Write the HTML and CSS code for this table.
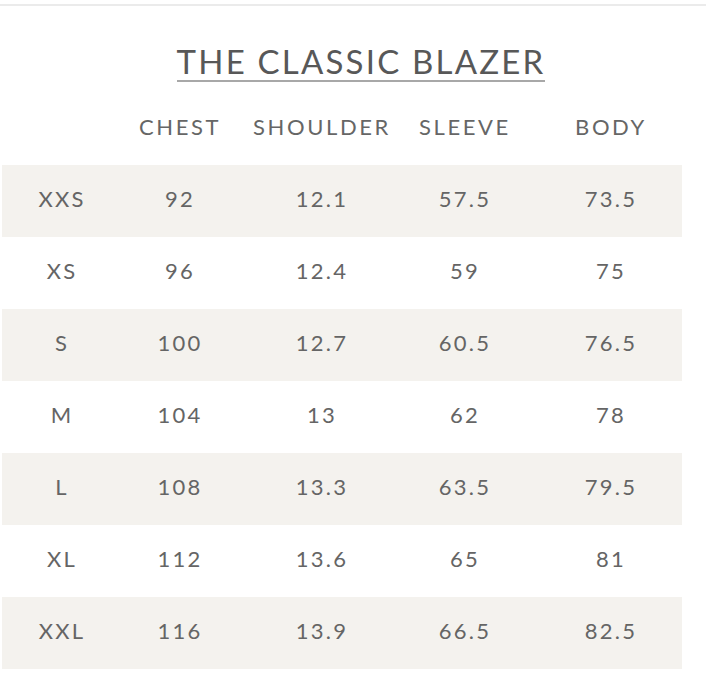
FILE: index.html
```html
<!DOCTYPE html>
<html>
<head>
<meta charset="utf-8">
<link rel="stylesheet" href="styles.css">
</head>
<body>
<div class="topline"></div>
<div class="title-wrap"><h1 class="title">THE CLASSIC BLAZER</h1></div>
<div class="table">
  <div class="row head">
    <div class="c c1"></div><div class="c c2">CHEST</div><div class="c c3">SHOULDER</div><div class="c c4">SLEEVE</div><div class="c c5">BODY</div>
  </div>
  <div class="row shade">
    <div class="c c1">XXS</div><div class="c c2">92</div><div class="c c3">12.1</div><div class="c c4">57.5</div><div class="c c5">73.5</div>
  </div>
  <div class="row">
    <div class="c c1">XS</div><div class="c c2">96</div><div class="c c3">12.4</div><div class="c c4">59</div><div class="c c5">75</div>
  </div>
  <div class="row shade">
    <div class="c c1">S</div><div class="c c2">100</div><div class="c c3">12.7</div><div class="c c4">60.5</div><div class="c c5">76.5</div>
  </div>
  <div class="row">
    <div class="c c1">M</div><div class="c c2">104</div><div class="c c3">13</div><div class="c c4">62</div><div class="c c5">78</div>
  </div>
  <div class="row shade">
    <div class="c c1">L</div><div class="c c2">108</div><div class="c c3">13.3</div><div class="c c4">63.5</div><div class="c c5">79.5</div>
  </div>
  <div class="row">
    <div class="c c1">XL</div><div class="c c2">112</div><div class="c c3">13.6</div><div class="c c4">65</div><div class="c c5">81</div>
  </div>
  <div class="row shade">
    <div class="c c1">XXL</div><div class="c c2">116</div><div class="c c3">13.9</div><div class="c c4">66.5</div><div class="c c5">82.5</div>
  </div>
</div>
</body>
</html>
```
FILE: styles.css
```css
html, body {
  margin: 0;
  padding: 0;
  background: #ffffff;
}
body {
  font-family: Lato, "Liberation Sans", sans-serif;
  color: #656565;
  width: 706px;
  height: 680px;
  overflow: hidden;
}
.topline {
  margin-top: 4px;
  height: 2px;
  background: #ebebeb;
}
.title-wrap {
  height: 86px;
  display: flex;
  justify-content: center;
  align-items: flex-start;
  padding-left: 16px;
  box-sizing: border-box;
}
.title {
  margin: 38px 0 0 0;
  font-weight: 400;
  font-size: 33px;
  line-height: 34px;
  letter-spacing: 2.2px;
  color: #585858;
  padding-bottom: 2px;
  border-bottom: 2px solid #a8a8a8;
}
.table {
  margin-left: 2px;
  width: 680px;
}
.row {
  display: grid;
  grid-template-columns: 120px 116px 168px 118px 158px;
  height: 72px;
  align-items: center;
  font-size: 22px;
  letter-spacing: 2.2px;
}
.row .c {
  padding-bottom: 5px;
}
.row.head {
  height: 73px;
  font-size: 22px;
  letter-spacing: 2.6px;
  color: #666666;
}
.row.shade {
  background: #f4f2ee;
}
.c {
  text-align: center;
}
.c5 {
  padding-left: 16px;
}
```
